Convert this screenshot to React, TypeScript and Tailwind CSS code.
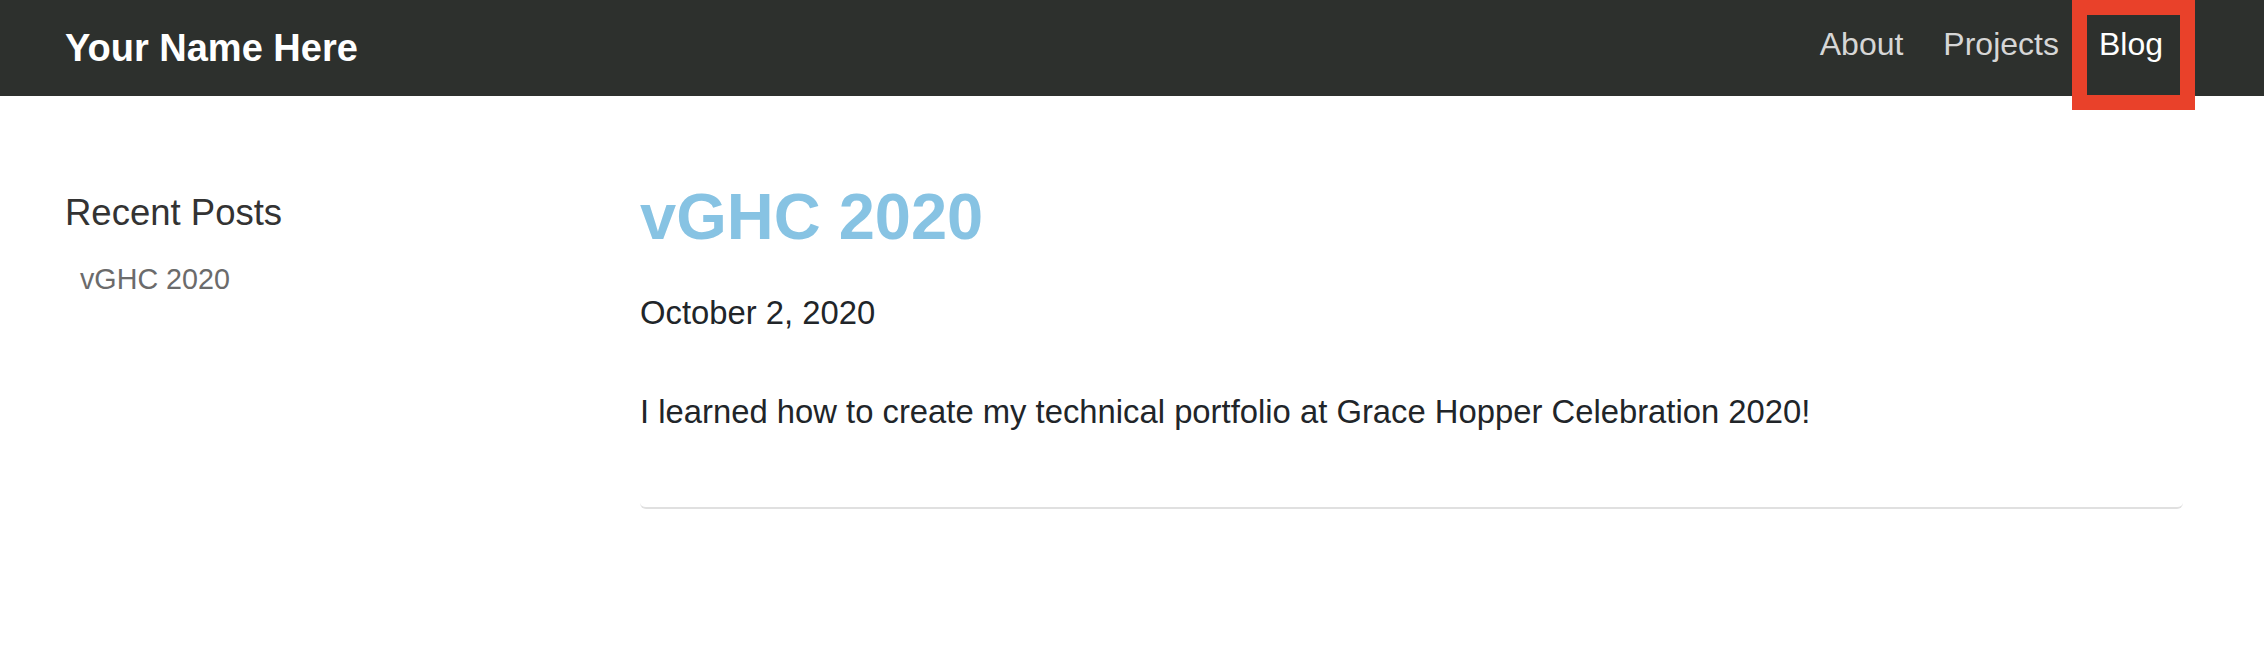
const posts = [
  {
    title: "vGHC 2020",
    date: "October 2, 2020",
    body: "I learned how to create my technical portfolio at Grace Hopper Celebration 2020!",
  },
];

const links = [
  { text: "About", active: false },
  { text: "Projects", active: false },
  { text: "Blog", active: true },
];

export default function App() {
  return (
    <div className="min-h-[666px] bg-white font-['Liberation_Sans',Arial,sans-serif]">
      <header className="relative flex h-[96px] items-center justify-between bg-[#2d302d] pl-[65px] pr-[81px]">
        <a href="#" className="text-[38px] font-bold leading-none text-white">
          Your Name Here
        </a>
        <nav className="-mt-[8px] flex">
          {links.map((link) => (
            <a
              key={link.text}
              href="#"
              className={
                link.active
                  ? "px-[20px] text-[32px] leading-[48px] text-white"
                  : "px-[20px] text-[32px] leading-[48px] text-[#d6d6d6] hover:text-white"
              }
            >
              {link.text}
            </a>
          ))}
        </nav>
        {/* highlight box around the current page */}
        <div className="pointer-events-none absolute right-[69px] top-0 z-10 h-[110px] w-[123px] border-[15px] border-[#e9412a]" />
      </header>

      <main className="flex items-start pl-[65px] pr-[81px] pt-[82px]">
        <aside className="w-[575px] shrink-0 pt-[13px]">
          <h2 className="text-[36.5px] leading-[43px] text-[#333333]">Recent Posts</h2>
          <ul className="mt-[24px] pl-[15px]">
            {posts.map((post) => (
              <li key={post.title}>
                <a href="#" className="text-[28.7px] leading-[42px] text-[#6b6b6b]">
                  {post.title}
                </a>
              </li>
            ))}
          </ul>
        </aside>

        <section className="flex-1">
          {posts.map((post) => (
            <article
              key={post.title}
              className="rounded-b-[6px] border-b-2 border-[#e0e0e0] pb-[71px]"
            >
              <h1 className="text-[65px] font-bold leading-[78px] text-[#87c3e3]">
                {post.title}
              </h1>
              <p className="mt-[33px] text-[32.8px] leading-[48px] text-[#212529]">{post.date}</p>
              <p className="mt-[51px] text-[32.8px] leading-[48px] text-[#212529]">{post.body}</p>
            </article>
          ))}
        </section>
      </main>
    </div>
  );
}
